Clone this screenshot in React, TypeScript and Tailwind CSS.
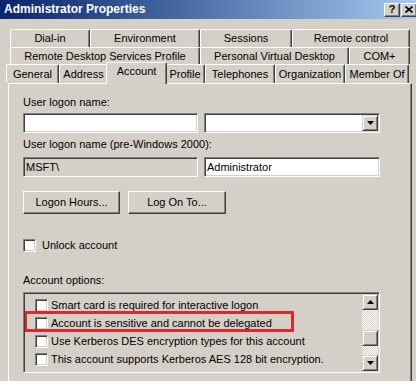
import React from "react";

const sunken =
  "border border-t-[#808080] border-l-[#808080] border-b-white border-r-white shadow-[inset_1px_1px_0_#404040,inset_-1px_-1px_0_#d4d0c8]";
const raised =
  "border border-t-white border-l-white border-b-[#404040] border-r-[#404040] shadow-[inset_-1px_-1px_0_#808080]";
const sbRaised =
  "border border-t-[#d4d0c8] border-l-[#d4d0c8] border-b-[#404040] border-r-[#404040] shadow-[inset_1px_1px_0_#ffffff,inset_-1px_-1px_0_#808080]";
const dither =
  "bg-[repeating-conic-gradient(#ffffff_0%_25%,#d4d0c8_0%_50%)] bg-[length:2px_2px]";

function Tab({ label, w, h }: { label: string; w: string; h: string }) {
  return (
    <div
      className={`${w} ${h} shrink-0 border-t border-l border-white border-r border-r-[#404040] shadow-[inset_-1px_0_0_#808080] rounded-t-[2px] flex items-center justify-center whitespace-nowrap bg-[#d4d0c8]`}
    >
      {label}
    </div>
  );
}

function Check() {
  return <div className={`w-[13px] h-[13px] shrink-0 bg-white ${sunken}`} />;
}

function Arrow({ up }: { up?: boolean }) {
  return (
    <svg width="7" height="4" viewBox="0 0 7 4">
      {up ? <polygon points="3.5,0 7,4 0,4" fill="#000" /> : <polygon points="0,0 7,0 3.5,4" fill="#000" />}
    </svg>
  );
}

export default function App() {
  const row1: [string, string][] = [
    ["Dial-in", "w-[80px]"],
    ["Environment", "w-[110px]"],
    ["Sessions", "w-[92px]"],
    ["Remote control", "w-[118px]"],
  ];
  const row2: [string, string][] = [
    ["Remote Desktop Services Profile", "w-[190px]"],
    ["Personal Virtual Desktop", "w-[149px]"],
    ["COM+", "w-[61px]"],
  ];
  const items = [
    "Smart card is required for interactive logon",
    "Account is sensitive and cannot be delegated",
    "Use Kerberos DES encryption types for this account",
    "This account supports Kerberos AES 128 bit encryption.",
    "",
  ];
  return (
    <div className="w-[416px] h-[381px] overflow-hidden bg-[#d4d0c8] flex flex-col font-['Liberation_Sans',Arial,sans-serif] text-[11px] leading-[13px] text-black">
      {/* Title bar */}
      <div className="h-[19px] shrink-0 bg-linear-to-r from-[#0a246a] to-[#a6caf0] flex items-center pl-[4px]">
        <div className="flex-1 text-white font-bold text-[12px] leading-[15px]">Administrator Properties</div>
        <div className="flex gap-[1px] -mr-[1px]">
          <div className={`w-[16px] h-[14px] bg-[#d4d0c8] ${raised} flex items-center justify-center font-bold text-[11px] leading-[11px]`}>
            ?
          </div>
          <div className={`w-[16px] h-[14px] bg-[#d4d0c8] ${raised} flex items-center justify-center`}>
            <svg width="8" height="7" viewBox="0 0 8 7">
              <path d="M0.5 0.5 L7.5 6.5 M7.5 0.5 L0.5 6.5" stroke="#000" strokeWidth="1.6" />
            </svg>
          </div>
        </div>
      </div>

      {/* Tabs */}
      <div className="mt-[10px] flex flex-col">
        <div className="flex ml-[10px]">
          {row1.map(([l, w]) => (
            <Tab key={l} label={l} w={w} h="h-[18px]" />
          ))}
        </div>
        <div className="flex ml-[10px]">
          {row2.map(([l, w]) => (
            <Tab key={l} label={l} w={w} h="h-[17px]" />
          ))}
        </div>
        <div className="flex ml-[6px] items-start h-[19px]">
          <Tab label="General" w="w-[53px]" h="h-[19px]" />
          <Tab label="Address" w="w-[49px]" h="h-[19px]" />
          <div className="relative z-10 w-[61px] h-[22px] -mt-[2px] -mx-[2px] shrink-0 border-t border-l border-white border-r border-r-[#404040] shadow-[inset_-1px_0_0_#808080] rounded-t-[2px] bg-[#d4d0c8] flex justify-center pt-[2px]">
            Account
          </div>
          <Tab label="Profile" w="w-[40px]" h="h-[19px]" />
          <Tab label="Telephones" w="w-[70px]" h="h-[19px]" />
          <Tab label="Organization" w="w-[70px]" h="h-[19px]" />
          <Tab label="Member Of" w="w-[64px]" h="h-[19px]" />
        </div>
      </div>

      {/* Panel */}
      <div className="w-[404px] ml-[8px] h-[320px] shrink-0 border-t border-l border-white border-r border-r-[#404040] shadow-[inset_-1px_0_0_#808080] pl-[14px] pt-[12px] flex flex-col">
        <div>User logon name:</div>
        <div className="mt-[4px] flex gap-[6px] h-[20px]">
          <div className={`w-[175px] h-[20px] bg-white ${sunken}`} />
          <div className={`w-[176px] h-[20px] bg-white ${sunken} flex justify-end items-center pr-[1px]`}>
            <div className={`w-[16px] h-[16px] bg-[#d4d0c8] ${sbRaised} flex items-center justify-center`}>
              <Arrow />
            </div>
          </div>
        </div>
        <div className="mt-[5px]">User logon name (pre-Windows 2000):</div>
        <div className="mt-[6px] flex gap-[6px] h-[20px]">
          <div className={`w-[175px] h-[20px] bg-[#d4d0c8] ${sunken} flex items-center pl-[2px]`}>MSFT\</div>
          <div className={`w-[176px] h-[20px] bg-white ${sunken} flex items-center pl-[2px]`}>Administrator</div>
        </div>
        <div className="mt-[14px] flex gap-[8px]">
          <div className={`w-[97px] h-[23px] ${raised} flex items-center justify-center`}>Logon Hours...</div>
          <div className={`w-[98px] h-[23px] ${raised} flex items-center justify-center`}>Log On To...</div>
        </div>
        <div className="mt-[25px] flex items-center gap-[6px] h-[13px]">
          <Check />
          <span>Unlock account</span>
        </div>
        <div className="mt-[22px]">Account options:</div>
        <div className={`mt-[5px] w-[357px] h-[81px] ${sunken} flex p-[1px]`}>
          <div className="flex-1 overflow-hidden pt-[2px] flex flex-col">
            {items.map((t, i) => (
              <div key={i} className="relative h-[18px] shrink-0 flex items-center pl-[10px] gap-[3px] whitespace-nowrap">
                <Check />
                {t && <span>{t}</span>}
                {i === 1 && (
                  <div className="absolute -left-[1px] -top-[3px] w-[270px] h-[21px] border-[3px] border-[#e3242b]" />
                )}
              </div>
            ))}
          </div>
          <div className="w-[16px] flex flex-col shrink-0">
            <div className={`h-[16px] bg-[#d4d0c8] ${sbRaised} flex items-center justify-center`}>
              <Arrow up />
            </div>
            <div className={`h-[20px] ${dither}`} />
            <div className={`h-[16px] bg-[#d4d0c8] ${sbRaised}`} />
            <div className={`h-[9px] ${dither}`} />
            <div className={`h-[16px] bg-[#d4d0c8] ${sbRaised} flex items-center justify-center`}>
              <Arrow />
            </div>
          </div>
        </div>
      </div>
    </div>
  );
}
